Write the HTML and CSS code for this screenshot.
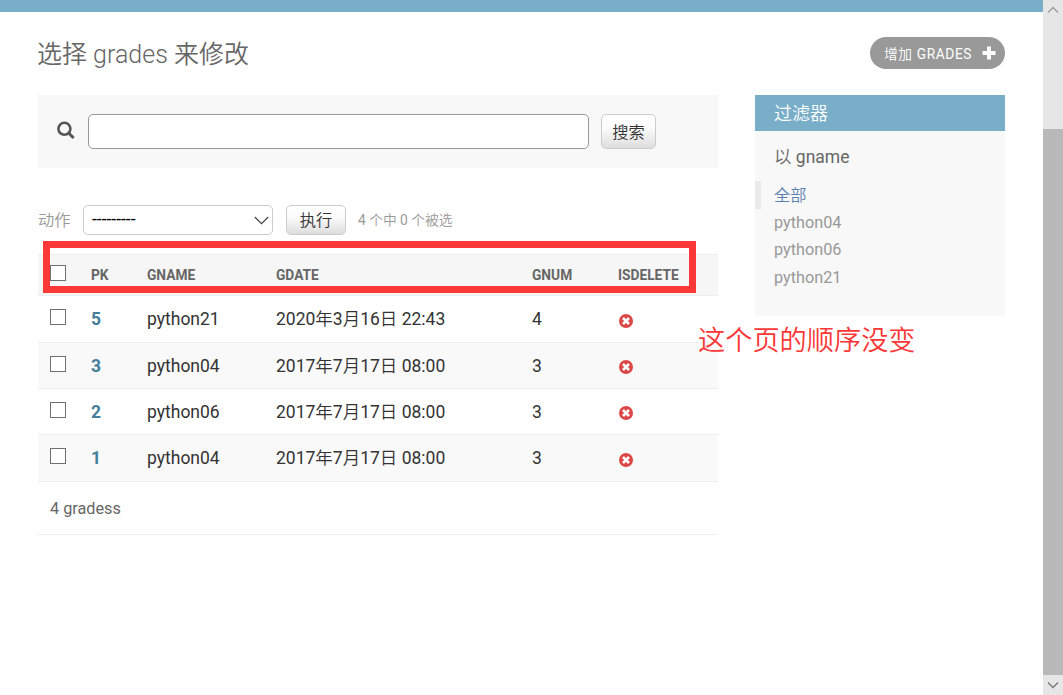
FILE: index.html
```
<!DOCTYPE html>
<html lang="zh-hans">

<head>
    <meta charset="UTF-8">
    <meta name="viewport" content="width=device-width, initial-scale=1.0">
    <title>选择 grades 来修改</title>
    <link rel="stylesheet" href="styles.css">
</head>

<body>
    <svg class="sprite">
        <symbol id="icon-no" viewBox="0 0 14 14">
            <circle cx="7" cy="7" r="7" fill="#dd4646"/>
            <path d="M4 4l6 6M10 4L4 10" stroke="#fff" stroke-width="2.6"/>
        </symbol>
    </svg>

    <div class="page">
        <div class="breadcrumbs"></div>
        <div class="content">
            <div class="title-row">
                <h1>选择 grades 来修改</h1>
                <a class="addlink" href="#">增加 GRADES
                    <svg width="14" height="14" viewBox="0 0 14 14"><path d="M7 .5v13M.5 7h13" stroke="#fff" stroke-width="4"/></svg>
                </a>
            </div>

            <div class="columns">
                <div class="changelist">
                    <form class="toolbar">
                        <svg width="19" height="19" viewBox="0 0 19 19" fill="none" stroke="#555">
                            <circle cx="8.4" cy="7.8" r="6" stroke-width="2.6"/>
                            <path d="M12.6 12l5 5" stroke-width="3"/>
                        </svg>
                        <input type="text" class="searchbar">
                        <button type="button" class="button search-button">搜索</button>
                    </form>

                    <div class="actions">
                        <label>动作</label>
                        <div class="select">
                            <span>---------</span>
                            <svg width="15" height="9" viewBox="0 0 15 9"><path d="M.8 1l6.7 6.7L14.2 1" fill="none" stroke="#444" stroke-width="1.2"/></svg>
                        </div>
                        <button type="button" class="button run-button">执行</button>
                        <span class="action-counter">4 个中 0 个被选</span>
                    </div>

                    <table class="results">
                        <colgroup>
                            <col class="col-check">
                            <col class="col-pk">
                            <col class="col-gname">
                            <col class="col-gdate">
                            <col class="col-gnum">
                            <col>
                        </colgroup>
                        <thead>
                            <tr>
                                <th><input type="checkbox"></th>
                                <th>PK</th>
                                <th>GNAME</th>
                                <th>GDATE</th>
                                <th>GNUM</th>
                                <th>ISDELETE</th>
                            </tr>
                        </thead>
                        <tbody>
                            <tr>
                                <td><input type="checkbox"></td>
                                <td><a href="#">5</a></td>
                                <td>python21</td>
                                <td>2020年3月16日 22:43</td>
                                <td>4</td>
                                <td><svg class="icon-no"><use href="#icon-no"/></svg></td>
                            </tr>
                            <tr>
                                <td><input type="checkbox"></td>
                                <td><a href="#">3</a></td>
                                <td>python04</td>
                                <td>2017年7月17日 08:00</td>
                                <td>3</td>
                                <td><svg class="icon-no"><use href="#icon-no"/></svg></td>
                            </tr>
                            <tr>
                                <td><input type="checkbox"></td>
                                <td><a href="#">2</a></td>
                                <td>python06</td>
                                <td>2017年7月17日 08:00</td>
                                <td>3</td>
                                <td><svg class="icon-no"><use href="#icon-no"/></svg></td>
                            </tr>
                            <tr>
                                <td><input type="checkbox"></td>
                                <td><a href="#">1</a></td>
                                <td>python04</td>
                                <td>2017年7月17日 08:00</td>
                                <td>3</td>
                                <td><svg class="icon-no"><use href="#icon-no"/></svg></td>
                            </tr>
                        </tbody>
                    </table>

                    <p class="paginator">4 gradess</p>
                </div>

                <div class="filter">
                    <h2>过滤器</h2>
                    <h3>以 gname</h3>
                    <ul>
                        <li class="selected"><a href="#">全部</a></li>
                        <li><a href="#">python04</a></li>
                        <li><a href="#">python06</a></li>
                        <li><a href="#">python21</a></li>
                    </ul>
                </div>
            </div>
        </div>
    </div>

    <div class="scrollbar">
        <svg width="12" height="8" viewBox="0 0 12 8"><path d="M1 6.5l5-5 5 5" fill="none" stroke="#999" stroke-width="1.3"/></svg>
        <div class="thumb"></div>
        <svg width="12" height="8" viewBox="0 0 12 8"><path d="M1 1.5l5 5 5-5" fill="none" stroke="#777" stroke-width="1.3"/></svg>
    </div>

    <div class="mark-box"></div>
    <div class="mark-text">这个页的顺序没变</div>
</body>

</html>
```
FILE: styles.css
```
* {
    box-sizing: border-box;
}

body {
    margin: 0;
    height: 695px;
    display: flex;
    position: relative;
    overflow: hidden;
    background: #fff;
    color: #333;
    font-family: Roboto, "Noto Sans CJK SC DemiLight", "Noto Sans CJK SC", sans-serif;
    font-size: 17.5px;
}

a {
    text-decoration: none;
}

.sprite {
    position: absolute;
    width: 0;
    height: 0;
}

.page {
    width: 1043px;
}

.breadcrumbs {
    height: 12px;
    background: #79aec8;
}

.content {
    padding: 25px 38px 0;
}

.title-row {
    display: flex;
    justify-content: space-between;
    height: 58px;
}

h1 {
    margin: 0 0 0 -1px;
    font-size: 25px;
    font-weight: 300;
    line-height: 36px;
    color: #666;
}

.addlink {
    display: flex;
    align-items: center;
    justify-content: space-between;
    width: 135px;
    height: 32px;
    padding: 0 9px 1px 14px;
    border-radius: 16px;
    background: #999;
    color: #fff;
    font-size: 13.75px;
    letter-spacing: 0.6px;
    white-space: nowrap;
}

.columns {
    display: flex;
    justify-content: space-between;
    align-items: flex-start;
}

.changelist {
    width: 680px;
}

.toolbar {
    display: flex;
    align-items: center;
    height: 73px;
    padding-left: 18px;
    background: #f8f8f8;
}

.toolbar svg {
    margin-top: -3px;
}

.searchbar {
    width: 501px;
    height: 35px;
    margin: 0 12px 0 13px;
    border: 1px solid #999;
    border-radius: 5px;
    background: #fff;
}

.button {
    padding: 0 0 2px;
    border: 1px solid #ccc;
    border-radius: 5px;
    background: linear-gradient(#fff, #fbfbfb 40%, #ddd);
    color: #333;
    font-family: inherit;
    font-size: 16.25px;
}

.search-button {
    width: 55px;
    height: 35px;
}

.actions {
    display: flex;
    align-items: center;
    height: 30px;
    margin: 37px 0 19px;
    color: #999;
    font-size: 16.25px;
}

.actions label {
    width: 45px;
    padding-bottom: 2px;
}

.select {
    display: flex;
    justify-content: space-between;
    align-items: center;
    width: 190px;
    height: 30px;
    padding: 0 3px 0 8px;
    border: 1px solid #ccc;
    border-radius: 5px;
    color: #000;
    font-size: 17.5px;
}

.select span {
    padding-bottom: 2px;
}

.run-button {
    width: 60px;
    height: 30px;
    margin: 0 12px 0 13px;
}

.action-counter {
    padding-bottom: 2px;
    font-size: 13.75px;
}

.results {
    width: 100%;
    table-layout: fixed;
    border-collapse: separate;
    border-spacing: 0;
}

.col-check {
    width: 41px;
}

.col-pk {
    width: 56px;
}

.col-gname {
    width: 129px;
}

.col-gdate {
    width: 256px;
}

.col-gnum {
    width: 86px;
}

th,
td {
    padding: 0 0 0 12px;
    border-bottom: 1px solid #eee;
    text-align: left;
    vertical-align: middle;
    white-space: nowrap;
    line-height: 20px;
}

th {
    height: 42px;
    border-top: 1px solid #eee;
    background: #f6f6f6;
    color: #666;
    font-size: 13.75px;
    font-weight: 700;
}

td {
    height: 46px;
}

tbody tr:first-child td,
tbody tr:last-child td {
    height: 47px;
}

tbody tr:nth-child(even) {
    background: #f9f9f9;
}

td a {
    color: #447e9b;
    font-weight: 700;
}

input[type='checkbox'] {
    appearance: none;
    display: block;
    width: 16px;
    height: 16px;
    margin: -4px 0 0;
    border: 1px solid #707070;
    background: #fff;
}

.icon-no {
    display: block;
    width: 14px;
    height: 14px;
    margin: 3px 0 0 1px;
}

.paginator {
    height: 53px;
    margin: 0;
    padding-left: 12px;
    border-bottom: 1px solid #eee;
    color: #666;
    font-size: 16.25px;
    line-height: 53px;
}

.filter {
    width: 250px;
    height: 221px;
    background: #f8f8f8;
}

.filter h2 {
    height: 36px;
    margin: 0;
    padding-left: 19px;
    background: #79aec8;
    color: #fff;
    font-size: 18px;
    font-weight: 400;
    line-height: 38px;
}

.filter h3 {
    margin: 0;
    padding-left: 19px;
    color: #666;
    font-size: 17.5px;
    font-weight: 400;
    line-height: 53px;
    height: 50px;
}

.filter ul {
    margin: 0;
    padding: 0;
    list-style: none;
}

.filter li {
    height: 27.5px;
    padding-left: 19px;
    font-size: 16.25px;
    line-height: 28px;
}

.filter li a {
    color: #999;
}

.filter li.selected {
    padding-left: 13px;
    border-left: 6px solid #eaeaea;
    line-height: 29px;
}

.filter li.selected a {
    color: #5b80b2;
}

.scrollbar {
    display: flex;
    flex-direction: column;
    align-items: center;
    width: 20px;
    padding: 6px 0;
    background: #e6e6e6;
}

.thumb {
    width: 20px;
    height: 546px;
    margin: 115px 0 6px;
    background: #b9b9b9;
}

/* hand-drawn notes on top of the page */
.mark-box {
    position: absolute;
    left: 43px;
    top: 241px;
    width: 653px;
    height: 52px;
    border: 7px solid #fb3838;
}

.mark-text {
    position: absolute;
    left: 698px;
    top: 321px;
    color: #fb3838;
    font-size: 27.2px;
    line-height: 40px;
    white-space: nowrap;
}
```
